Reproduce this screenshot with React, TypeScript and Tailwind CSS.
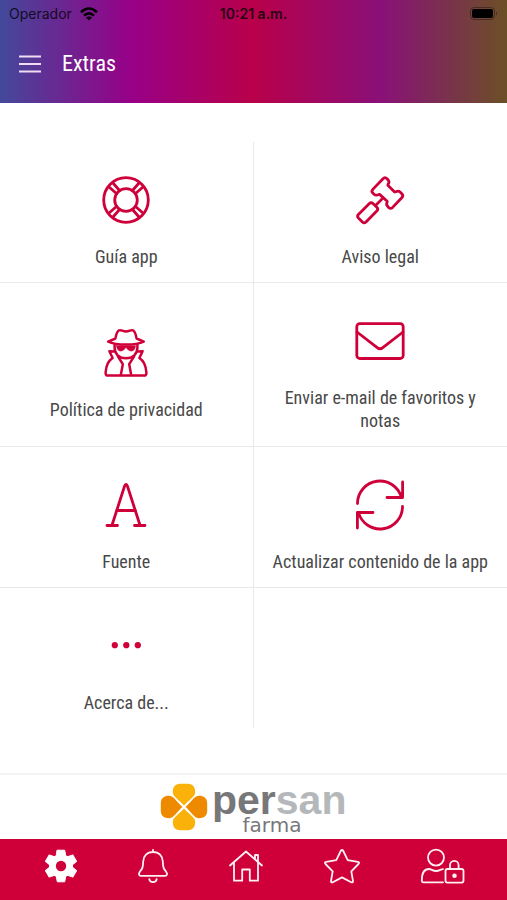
import type { ReactNode } from "react";

const GuideIcon = () => (
  <>
    <circle cx="24" cy="24" r="22.3" />
    <circle cx="24" cy="24" r="11.3" />
    {[0, 90, 180, 270].map((a) => (
      <path key={a} transform={`rotate(${a} 24 24)`} d="M30.5 14.5 37 7M33.5 17.5 41 11" />
    ))}
  </>
);

const GavelIcon = () => (
  <>
    <path d="M16.8 13.4 27 2.8Q29 .6 31 2.8L32.4 4.3Q33.6 5.8 32.4 7.6L31.8 9.2 38.6 16 40.2 15.6Q42.5 14.4 44 15.9L46 18Q47.6 19.8 46 21.5L36.6 31.4Q34.6 33.4 32.6 31.4L31.4 30Q30 28.6 31 26.8L31.2 25.2 23.6 18.4 21.4 19Q19.4 19.6 18 18.2L16.8 17Q15 15.2 16.8 13.4Z" />
    <path d="M26.5 22.5 20.5 28.5M13.4 27.5Q15.2 26 17 27.6L20.8 31.2Q22.6 33 21 34.8L10 46Q8.2 47.6 6.4 46L2.4 42Q.8 40.2 2.4 38.4Z" />
  </>
);

const SpyIcon = () => (
  <g strokeWidth="2.5">
    <path d="M13.4 9.5C14 6 15 3 16.6 1.6 18.6 0 20.4 2.4 24 2.4S29.4 0 31.4 1.6C33 3 34 6 34.6 9.5L41.8 12.6C37 15 31 15.6 24 15.6S11 15 6.2 12.6Z" />
    <path d="M12.6 16V18.5C12.6 25 17 29.2 24 29.2S35.4 25 35.4 18.5V16" />
    <path d="M14.5 16.8H33.5C33 20.6 31.5 22 29.3 22 27 22 25.6 20.6 24 18.2 22.4 20.6 21 22 18.7 22 16.5 22 15 20.6 14.5 16.8Z" fill="currentColor" strokeWidth="0.6" />
    <path d="M12.2 22.6 7.4 22.2 10.6 29C6 32 4 36 3.6 43.6Q3.4 46.6 6 46.6H42Q44.6 46.6 44.4 43.6C44 36 42 32 37.4 29L40.6 22.2 35.8 22.6" />
    <path d="M16 27.5 20.8 35.2 18.8 46M32 27.5 27.2 35.2 29.2 46" />
  </g>
);

const MailIcon = () => (
  <>
    <rect x="0.8" y="6.7" width="46.4" height="34.8" rx="3" />
    <path d="M1 15 21.2 30.6Q24 33 26.8 30.6L47 15" />
  </>
);

const FontIcon = () => (
  <path d="M9.9 44.5 22.6 5Q24 1.8 25.4 5L38.1 44.5M14.5 29.5H33.5M5 44.5H15.5M32.5 44.5H43" />
);

const RefreshIcon = () => (
  <>
    <path d="M1.5 22.5A22.4 22.4 0 0 1 45.5 16.5M46.6 1V16.5H31" />
    <path d="M46.5 25.5A22.4 22.4 0 0 1 2.5 31.5M1.4 47V31.5H17" />
  </>
);

const DotsIcon = () => (
  <g fill="currentColor" stroke="none">
    <circle cx="12.8" cy="23.2" r="3.1" />
    <circle cx="24.3" cy="23.2" r="3.1" />
    <circle cx="35.8" cy="23.2" r="3.1" />
  </g>
);

const options: { label: string; icon: ReactNode }[] = [
  { label: "Guía app", icon: <GuideIcon /> },
  { label: "Aviso legal", icon: <GavelIcon /> },
  { label: "Política de privacidad", icon: <SpyIcon /> },
  { label: "Enviar e-mail de favoritos y notas", icon: <MailIcon /> },
  { label: "Fuente", icon: <FontIcon /> },
  { label: "Actualizar contenido de la app", icon: <RefreshIcon /> },
  { label: "Acerca de...", icon: <DotsIcon /> },
];

function StatusBar() {
  return (
    <div className="grid h-7 grid-cols-3 items-center px-[9px] font-['Inter',sans-serif] text-sm text-black/80">
      <div className="flex items-center gap-2">
        <span>Operador</span>
        <svg width="18" height="14" viewBox="0 0 18 14" fill="none" stroke="black" strokeWidth="2.6" aria-hidden="true">
          <path d="M1 5.2Q9-2.2 17 5.2M4 8.6Q9 4 14 8.6" />
          <path d="M6 10.6Q9 8.4 12 10.6L9 13.6Z" fill="black" stroke="none" />
        </svg>
      </div>
      <span className="text-center font-semibold">10:21 a.m.</span>
      <svg className="justify-self-end" width="28" height="14" viewBox="0 0 28 14" aria-hidden="true">
        <rect x="0.5" y="0.5" width="24" height="12" rx="3.5" fill="none" stroke="black" strokeOpacity="0.35" />
        <rect x="2" y="2" width="21" height="9" rx="2" />
        <path d="M26 4.5Q28 6.5 26 8.5Z" fillOpacity="0.4" />
      </svg>
    </div>
  );
}

function OptionGrid() {
  return (
    <div className="grid grid-cols-2">
      {options.map(({ label, icon }, i) => (
        <button
          key={label}
          type="button"
          className={`flex flex-col items-center justify-center gap-[21px] border-[#e9e9e9] px-3 pt-[34px] pb-[14px] text-[#484848] ${i % 2 === 0 ? "border-r" : ""} ${i < 6 ? "border-b" : ""}`}
        >
          <svg className="text-[#cf0039]" width="48" height="48" viewBox="0 0 48 48" fill="none" stroke="currentColor" strokeWidth="2.8" strokeLinecap="round" strokeLinejoin="round" overflow="visible" aria-hidden="true">
            {icon}
          </svg>
          <span className="text-lg leading-[23px]">{label}</span>
        </button>
      ))}
    </div>
  );
}

function Logo() {
  return (
    <svg width="190" height="64" viewBox="0 -8 190 64" role="img" aria-label="persan farma">
      {[0, 90, 180, 270].map((a) => (
        <path
          key={a}
          transform={`rotate(${a} 25 24)`}
          d="M25 22.5C21 17.5 14 14 13.8 9.5 13.6 4.5 16 1 21 .8H29C34 1 36.4 4.5 36.2 9.5 36 14 29 17.5 25 22.5Z"
          fill={a % 180 === 0 ? "#fab20b" : "#ee8a00"}
        />
      ))}
      <text x="53" y="31" fontSize="41" fontWeight="700" fontFamily="'Liberation Sans', Arial, sans-serif" fill="#777779">
        per<tspan fill="#b5b8ba">san</tspan>
      </text>
      <text x="113" y="49" textAnchor="middle" fontSize="20" fontFamily="'DejaVu Sans', sans-serif" fill="#777779">
        farma
      </text>
    </svg>
  );
}

function TabBar() {
  const tabs: { name: string; width: number; icon: ReactNode }[] = [
    {
      name: "Extras",
      width: 32,
      icon: (
        <>
          <g fill="white" stroke="white" strokeWidth="1">
            <circle cx="16" cy="17" r="11.5" />
            {[0, 60, 120].map((a) => (
              <path key={a} transform={`rotate(${a} 16 17)`} d="M12.3 1.2H19.7L20.6 6V28L19.7 32.8H12.3L11.4 28V6Z" />
            ))}
          </g>
          <circle cx="16" cy="17" r="5.2" fill="#cf0039" stroke="none" />
        </>
      ),
    },
    {
      name: "Notificaciones",
      width: 30,
      icon: (
        <path d="M15 .8V3M15 3C9 3 5.4 7 5.2 12.5 5 18.5 4.5 19.5 2 22.5.2 25 .8 26.8 3 26.8H27C29.2 26.8 29.8 25 28 22.5 25.5 19.5 25 18.5 24.8 12.5 24.6 7 21 3 15 3ZM11.3 30.2C12 34.2 18 34.2 18.7 30.2" />
      ),
    },
    {
      name: "Inicio",
      width: 34,
      icon: (
        <path d="M1 16.5 17 2.5 33 16.5M5 13.5V31.7H13.2V20.5H20.8V31.7H29V13.5M26 10V6H29V13" />
      ),
    },
    {
      name: "Favoritos",
      width: 36,
      icon: (
        <path d="M16.7 2Q18 0 19.3 2L23.7 11.2 33.8 12.8Q36 13.2 34.5 15L27.3 22.4 29 32Q29.2 34 27.2 33.2L18 28.4 8.8 33.2Q6.8 34 7 32L8.7 22.4 1.5 15Q0 13.2 2.2 12.8L12.3 11.2Z" />
      ),
    },
    {
      name: "Cuenta",
      width: 44,
      icon: (
        <>
          <circle cx="15" cy="8.6" r="8" />
          <path d="M22 33.3H2.5Q.8 33.3.8 31.5C.8 24 3.5 20 8 20 10.5 20 11.5 22 15 22S20 20 22 20.2" />
          <rect x="24.5" y="20" width="18" height="13.6" rx="2" />
          <path d="M29 20V16.2A4.3 4.3 0 0 1 37.6 16.2V20" />
          <circle cx="33.5" cy="26.8" r="1.4" fill="white" />
        </>
      ),
    },
  ];
  return (
    <nav className="flex h-[61px] items-start justify-between bg-[#cf0039] pt-[10px] pr-[42px] pl-[45px]">
      {tabs.map(({ name, width, icon }) => (
        <a key={name} href="#" aria-label={name}>
          <svg width={width} height="34" viewBox={`0 0 ${width} 34`} fill="none" stroke="#fff0f4" strokeWidth="1.8" strokeLinecap="round" strokeLinejoin="round" overflow="visible" aria-hidden="true">
            {icon}
          </svg>
        </a>
      ))}
    </nav>
  );
}

export default function App() {
  return (
    <div className="flex min-h-screen flex-col bg-white font-['Roboto_Condensed','Liberation_Sans_Narrow',Roboto,sans-serif]">
      <header className="bg-[linear-gradient(90deg,#43499b_0%,#980087_26%,#b9004a_50%,#8a1078_75%,#6b5026_100%)] pb-[13px]">
        <StatusBar />
        <div className="flex h-[62px] items-center gap-[21px] px-[19px] pt-[10px]">
          <button type="button" aria-label="Menú">
            <svg width="22" height="18" viewBox="0 0 22 18" stroke="#f0dcf4" strokeWidth="1.8" aria-hidden="true">
              <path d="M0 1.5H22M0 9H22M0 16.5H22" />
            </svg>
          </button>
          <h1 className="text-[22px] leading-7 text-white">Extras</h1>
        </div>
      </header>
      <main className="flex-1 pt-[39px] pb-10">
        <OptionGrid />
      </main>
      <footer>
        <div className="flex h-[66px] items-center justify-center border-t-2 border-[#f3f3f3]">
          <Logo />
        </div>
        <TabBar />
      </footer>
    </div>
  );
}
